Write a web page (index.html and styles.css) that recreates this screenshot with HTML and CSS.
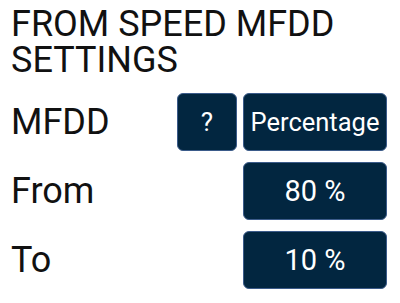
FILE: index.html
```html
<!DOCTYPE html>
<html>
<head>
    <title>MFDD Settings</title>
    <link rel="stylesheet" href="styles.css">
</head>
<body>
    <div class="settings">
        <h1 class="title">FROM SPEED MFDD SETTINGS</h1>

        <div class="setting-row">
            <span class="setting-label">MFDD</span>
            <button class="setting-btn help-btn">?</button>
            <button class="setting-btn value-btn small-text">Percentage</button>
        </div>

        <div class="setting-row">
            <span class="setting-label">From</span>
            <button class="setting-btn value-btn">80 %</button>
        </div>

        <div class="setting-row">
            <span class="setting-label">To</span>
            <button class="setting-btn value-btn">10 %</button>
        </div>
    </div>
</body>
</html>
```

FILE: styles.css
```css
:root {
    --btn-bg: #022640;
    --btn-border: #3b5b8a;
    --text-color: #111111;
}

* {
    margin: 0;
    padding: 0;
    box-sizing: border-box;
    font-family: Roboto, "Noto Sans", Arial, sans-serif;
}

body {
    background-color: #ffffff;
    color: var(--text-color);
}

.settings {
    padding: 6px 13px 0 11px;
    display: flex;
    flex-direction: column;
    gap: 11px;
}

.title {
    font-size: 36px;
    font-weight: 400;
    line-height: 36px;
    margin-bottom: 4px;
}

/* ========== Rows ========== */
.setting-row {
    display: flex;
    align-items: center;
    gap: 6px;
    height: 58px;
}

.setting-label {
    flex: 1;
    font-size: 36px;
}

.setting-btn {
    height: 58px;
    background-color: var(--btn-bg);
    border: 1.5px solid var(--btn-border);
    border-radius: 6px;
    color: #ffffff;
    font-size: 29px;
    cursor: pointer;
}

.help-btn {
    width: 60px;
    font-size: 26px;
}

.value-btn {
    width: 144px;
}

.small-text {
    font-size: 25.5px;
}
```
